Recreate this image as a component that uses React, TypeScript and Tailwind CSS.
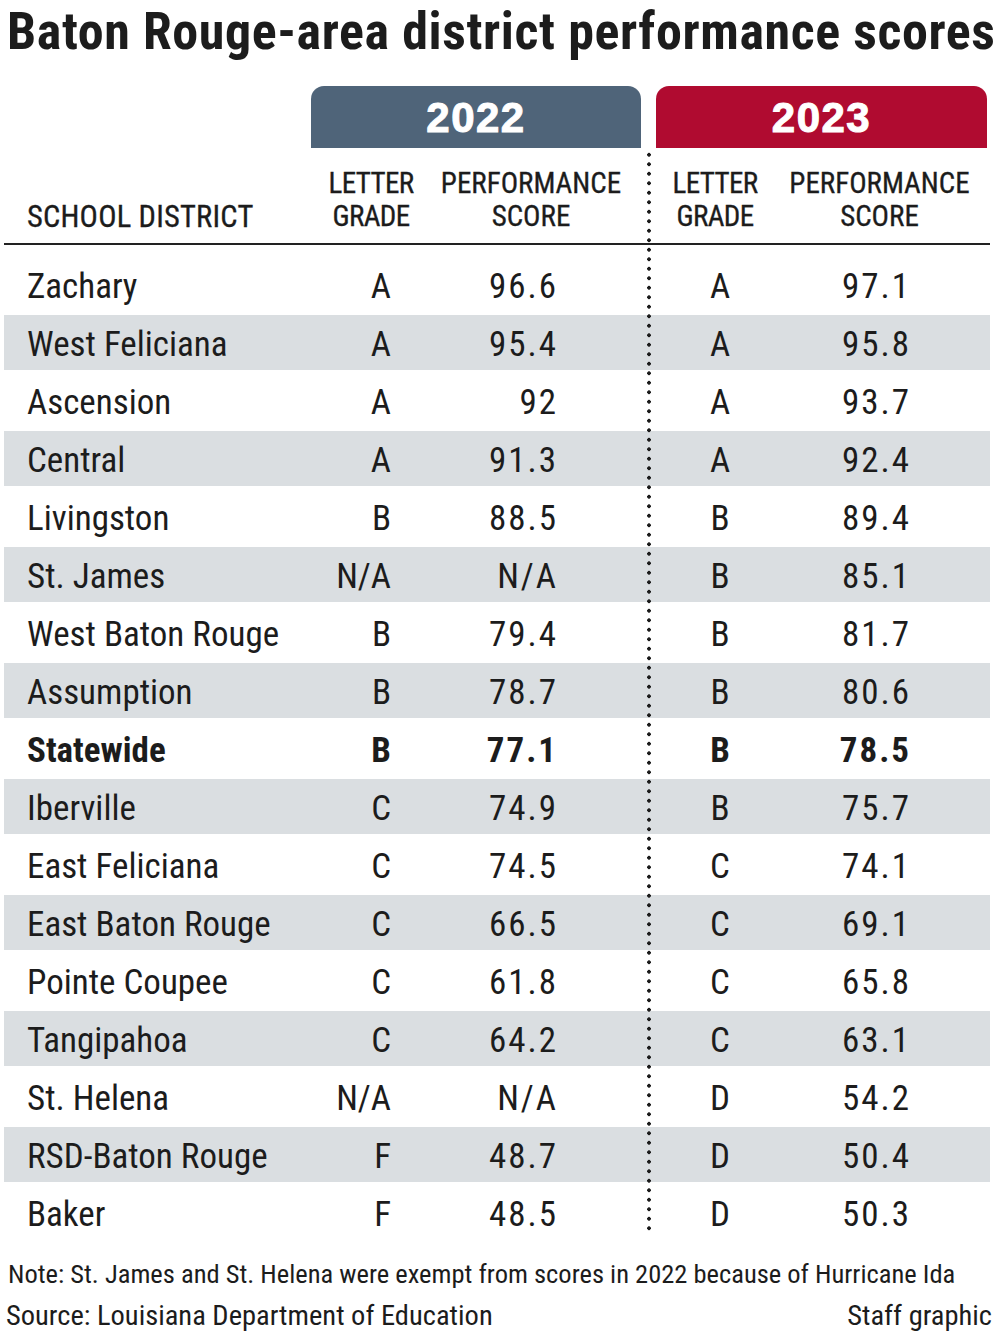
import React from 'react';

type Row = {
  district: string;
  g22: string;
  s22: string;
  g23: string;
  s23: string;
  bold?: boolean;
};

const rows: Row[] = [
  { district: 'Zachary', g22: 'A', s22: '96.6', g23: 'A', s23: '97.1' },
  { district: 'West Feliciana', g22: 'A', s22: '95.4', g23: 'A', s23: '95.8' },
  { district: 'Ascension', g22: 'A', s22: '92', g23: 'A', s23: '93.7' },
  { district: 'Central', g22: 'A', s22: '91.3', g23: 'A', s23: '92.4' },
  { district: 'Livingston', g22: 'B', s22: '88.5', g23: 'B', s23: '89.4' },
  { district: 'St. James', g22: 'N/A', s22: 'N/A', g23: 'B', s23: '85.1' },
  { district: 'West Baton Rouge', g22: 'B', s22: '79.4', g23: 'B', s23: '81.7' },
  { district: 'Assumption', g22: 'B', s22: '78.7', g23: 'B', s23: '80.6' },
  { district: 'Statewide', g22: 'B', s22: '77.1', g23: 'B', s23: '78.5', bold: true },
  { district: 'Iberville', g22: 'C', s22: '74.9', g23: 'B', s23: '75.7' },
  { district: 'East Feliciana', g22: 'C', s22: '74.5', g23: 'C', s23: '74.1' },
  { district: 'East Baton Rouge', g22: 'C', s22: '66.5', g23: 'C', s23: '69.1' },
  { district: 'Pointe Coupee', g22: 'C', s22: '61.8', g23: 'C', s23: '65.8' },
  { district: 'Tangipahoa', g22: 'C', s22: '64.2', g23: 'C', s23: '63.1' },
  { district: 'St. Helena', g22: 'N/A', s22: 'N/A', g23: 'D', s23: '54.2' },
  { district: 'RSD-Baton Rouge', g22: 'F', s22: '48.7', g23: 'D', s23: '50.4' },
  { district: 'Baker', g22: 'F', s22: '48.5', g23: 'D', s23: '50.3' },
];

const cols = 'grid grid-cols-[307px_120px_218px_132px_209px]';

const HeaderLabel: React.FC<{ top: string; bottom: string; className?: string }> = ({ top, bottom, className }) => (
  <div className={`flex flex-col items-center leading-[33px] ${className ?? ''}`}>
    <span>{top}</span>
    <span>{bottom}</span>
  </div>
);

export default function App() {
  return (
    <div className="w-[1000px] h-[1344px] bg-white text-[#1c1c1c] font-['Liberation_Sans_Narrow','Roboto_Condensed','DejaVu_Sans_Condensed','Liberation_Sans',sans-serif] overflow-hidden">
      <h1 className="pl-[7px] pt-[3px] h-[86px] text-[52px] leading-[58px] font-bold tracking-[0.6px] whitespace-nowrap">
        Baton Rouge-area district performance scores
      </h1>

      <div className="ml-[311px] flex gap-[15px] h-[62px]">
        <div className="w-[330px] rounded-t-[13px] bg-[#4f6479] flex items-center justify-center text-white font-['Liberation_Sans',sans-serif] font-bold text-[42px] tracking-[1.5px] [-webkit-text-stroke:1px_white]">
          2022
        </div>
        <div className="w-[331px] rounded-t-[13px] bg-[#b00b30] flex items-center justify-center text-white font-['Liberation_Sans',sans-serif] font-bold text-[42px] tracking-[1.5px] [-webkit-text-stroke:1px_white]">
          2023
        </div>
      </div>

      <div className="relative ml-[4px] w-[986px]">
        <div className="absolute left-[643px] top-[2px] w-[4px] h-[1083px] bg-[radial-gradient(circle,#1a1a1a_1.6px,transparent_2.1px)] bg-[length:4px_9.5px] bg-repeat-y" />

        <div className={`${cols} h-[97px] items-end pb-[10px] border-b-2 border-[#222] text-[29px] [-webkit-text-stroke:0.3px_#1c1c1c]`}>
          <div className="pl-[23px] leading-[33px] text-[30.5px] tracking-[0.2px]">SCHOOL DISTRICT</div>
          <HeaderLabel top="LETTER" bottom="GRADE" className="tracking-[-0.6px]" />
          <HeaderLabel top="PERFORMANCE" bottom="SCORE" className="pr-[18px]" />
          <HeaderLabel top="LETTER" bottom="GRADE" className="tracking-[-0.6px]" />
          <HeaderLabel top="PERFORMANCE" bottom="SCORE" className="pr-[12px]" />
        </div>

        <div className="mt-[12px]">
          {rows.map((r, i) => (
            <div
              key={r.district}
              className={`${cols} h-[58px] items-center pt-[3px] border-b-[3px] border-white text-[35px] leading-none ${
                i % 2 === 1 ? 'bg-[#dadee1]' : 'bg-white'
              } ${r.bold ? 'font-bold' : ''}`}
            >
              <div className="pl-[23px] whitespace-nowrap">{r.district}</div>
              <div className="text-right pr-[40px]">{r.g22}</div>
              <div className="text-right pr-[91px] tracking-[2px]">{r.s22}</div>
              <div className="text-center pl-[10px]">{r.g23}</div>
              <div className="text-right pr-[79px] tracking-[2px]">{r.s23}</div>
            </div>
          ))}
        </div>
      </div>

      <div className="mt-[10px] pl-[8px] text-[26.5px] leading-[42px] whitespace-nowrap">
        Note: St. James and St. Helena were exempt from scores in 2022 because of Hurricane Ida
      </div>
      <div className="flex justify-between pl-[6px] pr-[8px] text-[28.5px] leading-[42px] whitespace-nowrap">
        <span>Source: Louisiana Department of Education</span>
        <span>Staff graphic</span>
      </div>
    </div>
  );
}
